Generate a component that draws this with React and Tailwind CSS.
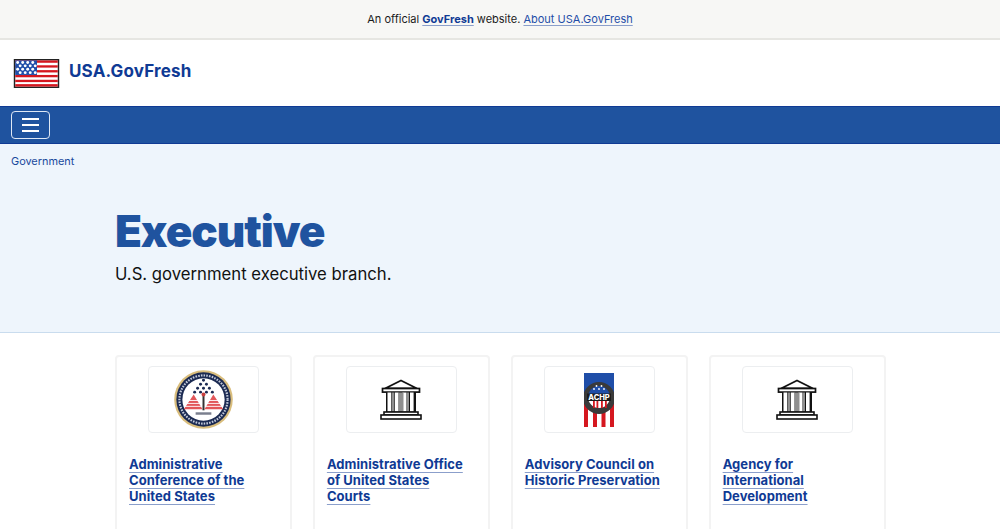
import React from 'react';

const agencies = [
    { title: ['Administrative', 'Conference of the', 'United States'], logo: 'acus' },
    { title: ['Administrative Office', 'of United States', 'Courts'], logo: 'building' },
    { title: ['Advisory Council on', 'Historic Preservation'], logo: 'achp' },
    { title: ['Agency for', 'International', 'Development'], logo: 'building' },
];

const FlagIcon = () => (
    <svg width="47" height="29" viewBox="0 0 47 30" className="block">
        <rect width="47" height="30" fill="#222" />
        <rect x="1.5" y="1.5" width="44" height="27" fill="#fff" />
        {[1.5, 6.5, 11.5, 16.5, 21.5, 26].map((y, i) => (
            <rect key={i} x="1.5" y={y} width="44" height={i === 5 ? 2.5 : 2.4} fill="#d5171f" />
        ))}
        <rect x="1.5" y="1.5" width="22.5" height="15" fill="#1f4ea8" />
        {[0, 1, 2, 3].map(r => (
            [0, 1, 2, 3].map(c => (
                <circle key={`${r}-${c}`} cx={4 + c * 5.2 + (r % 2 ? 2.6 : 0)} cy={3.6 + r * 3.5} r="1.5" fill="#fff" />
            ))
        ))}
    </svg>
);

const BuildingIcon = () => (
    <svg width="42" height="41" viewBox="0 0 42 41" className="block">
        <path d="M21 1.5 L37 9.5 H5 Z" fill="#fff" stroke="#111" strokeWidth="1.8" strokeLinejoin="round" />
        <rect x="2.5" y="9.5" width="37" height="3.6" fill="#fff" stroke="#111" strokeWidth="1.7" />
        <rect x="6" y="13" width="30" height="20" fill="#111" />
        {[7.5, 15, 22.5, 30].map(x => <rect key={x} x={x} y="13.5" width="3.6" height="19" fill="#fff" />)}
        {[11.5, 18.5, 26].map(x => <rect key={x} x={x} y="13.5" width={x === 18.5 ? 5 : 3} height="19" fill="#8f8f8f" />)}
        <rect x="4" y="33" width="34" height="3" fill="#fff" stroke="#111" strokeWidth="1.6" />
        <rect x="1" y="36" width="40" height="4" fill="#fff" stroke="#111" strokeWidth="1.6" />
    </svg>
);

const AcusSeal = () => (
    <svg width="59" height="59" viewBox="0 0 60 60" className="block">
        <circle cx="30" cy="30" r="29.8" fill="#d9bd7c" />
        <circle cx="30" cy="30" r="27.6" fill="#1b2a52" />
        <circle cx="30" cy="30" r="21.5" fill="#fff" />
        <circle cx="30" cy="30" r="24.5" fill="none" stroke="#c4cbdb" strokeWidth="2.2" strokeDasharray="1.6 1.2" />
        {[[30, 10.5], [27, 14.5], [33, 14.5], [24, 18.5], [30, 18.5], [36, 18.5], [21, 22.5], [27, 22.5], [33, 22.5], [39, 22.5]].map(([x, y], i) => (
            <circle key={i} cx={x} cy={y} r="1.5" fill="#1b2a52" />
        ))}
        <path d="M20 25 L29 40 H10 Z" fill="#e2575a" />
        <path d="M40 25 L50 40 H31 Z" fill="#e2575a" />
        {[30.5, 33.5, 36.5].map(y => <rect key={y} x="10" y={y} width="40" height="0.9" fill="#fff" />)}
        <rect x="29" y="26" width="2" height="15" fill="#333" />
        <circle cx="30" cy="25" r="2" fill="#c8403f" />
        <rect x="22" y="43" width="16" height="2.5" fill="#7a7f8e" />
    </svg>
);

const AchpLogo = () => (
    <svg width="30" height="54" viewBox="0 0 30 54" className="block">
        <rect width="30" height="20" fill="#1f4ea8" />
        <rect y="20" width="30" height="34" fill="#fff" />
        {[0, 9, 17.5, 26].map(x => <rect key={x} x={x} y="30" width="4" height="24" fill="#d5171f" />)}
        <circle cx="15" cy="25" r="16" fill="#3a3a3a" />
        <path d="M4 24 A11 11 0 0 1 26 24 Z" fill="#1f4ea8" />
        <path d="M4 24 H26 A11 11 0 0 1 4 24 Z" fill="#fff" />
        {[9, 12.5, 17, 21].map(x => <rect key={x} x={x} y="28" width="1.8" height="7" fill="#d5171f" />)}
        <rect x="3" y="20.5" width="24" height="7.5" fill="#1c1c1c" />
        <text x="15" y="27" textAnchor="middle" fontSize="7.5" fontWeight="800" fill="#fff" fontFamily="Inter, sans-serif">ACHP</text>
        {[10, 15, 20, 12.5, 17.5].map((x, i) => <circle key={i} cx={x} cy={i < 3 ? 16 : 13} r="0.9" fill="#fff" />)}
    </svg>
);

const logos = { building: BuildingIcon, acus: AcusSeal, achp: AchpLogo };

const AgencyCard = ({ title, logo }) => {
    const Logo = logos[logo];
    return (
        <div className="h-[200px] rounded border-2 border-[#f3f3f3] pt-[9px] px-[12px]">
            <div className="mx-auto flex h-[67px] w-[111px] items-center justify-center rounded border border-[#eceef0] bg-white">
                <Logo />
            </div>
            <a href="#" className="mt-[23px] block text-[13px] font-bold leading-[16px] tracking-[0.004em] text-[#0f3a94]">
                {title.map(line => (
                    <span key={line} className="block w-fit underline decoration-[#8b9fcb] decoration-1 underline-offset-[2.5px]">{line}</span>
                ))}
            </a>
        </div>
    );
};

export default function App() {
    return (
        <div className="h-[529px] overflow-hidden bg-white font-['Inter',sans-serif] text-[#1b1b1b]">
            <div className="flex h-[40px] items-center justify-center border-b-2 border-[#e6e6e2] bg-[#f7f7f5] text-[11px]">
                <span>An official <a href="#" className="font-bold text-[#0f3a94] underline decoration-[#8b9fcb] underline-offset-2">GovFresh</a> website. <a href="#" className="text-[#1f4ea8] underline decoration-[#8b9fcb] underline-offset-2">About USA.GovFresh</a></span>
            </div>
            <header className="flex h-[66px] items-center gap-[9px] pl-[13px]">
                <FlagIcon />
                <a href="#" className="mb-[3px] text-[17px] font-bold tracking-[0.01em] text-[#0f3a94]">USA.GovFresh</a>
            </header>
            <nav className="flex h-[38px] items-center border-y border-[#0f3a94] bg-[#1f539f] pl-[11px]">
                <button className="flex h-[28px] w-[39px] flex-col items-center justify-center gap-[4px] rounded border border-[#dfe8f5]">
                    <span className="h-[2px] w-[17px] bg-white" />
                    <span className="h-[2px] w-[17px] bg-white" />
                    <span className="h-[2px] w-[17px] bg-white" />
                </button>
            </nav>
            <section className="h-[189px] border-b border-[#c9dcee] bg-[#eef5fc]">
                <div className="pl-[11px] pt-[10px] text-[10.9px] leading-[14px] text-[#1a4a9c]">Government</div>
                <div className="pl-[115px]">
                    <h1 className="mt-[36px] text-[44px] font-black leading-[54px] tracking-[-0.025em] text-[#1f539f]">Executive</h1>
                    <p className="mt-[4px] text-[16.7px] leading-[24px] text-[#111]">U.S. government executive branch.</p>
                </div>
            </section>
            <main className="ml-[115px] mt-[22px] grid w-[770.5px] grid-cols-4 gap-[21px]">
                {agencies.map(a => <AgencyCard key={a.title[0]} title={a.title} logo={a.logo} />)}
            </main>
        </div>
    );
}
